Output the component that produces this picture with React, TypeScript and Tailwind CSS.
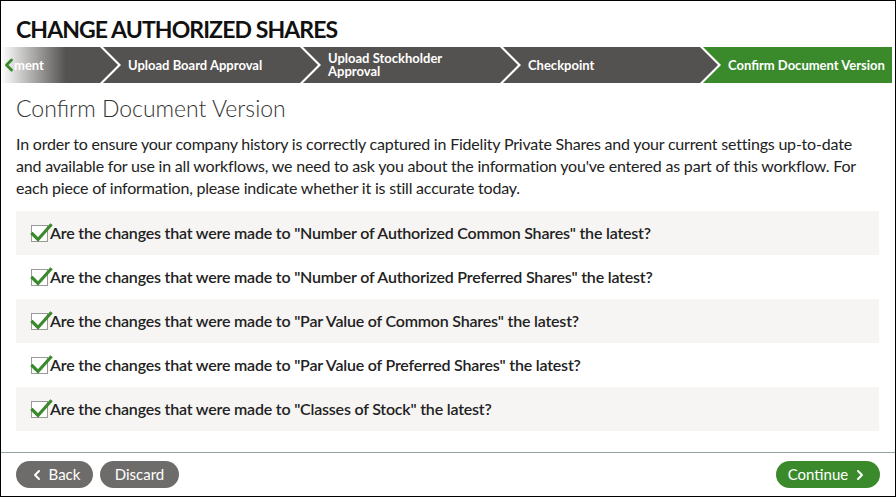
import { ChevronLeft, ChevronRight } from 'lucide-react';

const questions = [
  'Number of Authorized Common Shares',
  'Number of Authorized Preferred Shares',
  'Par Value of Common Shares',
  'Par Value of Preferred Shares',
  'Classes of Stock',
];

function CheckedBox() {
  return (
    <span className="relative inline-block w-[17px] h-[17px] border border-[#9a9a9a] bg-white shrink-0">
      <svg className="absolute -left-[1px] -top-[4px] w-[22px] h-[22px] overflow-visible" viewBox="0 0 22 22" fill="none">
        <path d="M1.5 12 L7 17.5 L19.5 3.5" stroke="#3a8a2c" strokeWidth={3.2} strokeLinecap="square" strokeLinejoin="miter" />
      </svg>
    </span>
  );
}

export default function App() {
  return (
    <div className="w-[896px] h-[497px] border border-black bg-white flex flex-col font-['Lato',sans-serif] text-[#222] overflow-hidden">
      {/* Title */}
      <h1 className="px-[15px] pt-[13px] text-[23px] leading-[30px] font-bold tracking-[-0.9px] text-[#111]">
        CHANGE AUTHORIZED SHARES
      </h1>

      {/* Stepper */}
      <div className="mt-[3px] flex h-[36px] pr-[3px] text-white text-[13px] font-bold leading-[13px]">
        <div className="relative w-[117px] shrink-0 flex items-center pl-[13px] bg-[linear-gradient(to_right,#ffffff_0px,#545250_65px)] [clip-path:polygon(0_0,calc(100%_-_18px)_0,100%_50%,calc(100%_-_18px)_100%,0_100%)]">
          <ChevronLeft className="absolute -left-[2px] w-[20px] h-[20px] text-[#3a8a2c]" strokeWidth={3.5} />
          ment
        </div>
        {['Upload Board Approval', 'Upload Stockholder Approval', 'Checkpoint'].map((s) => (
          <div
            key={s}
            className="w-[215px] -ml-[15px] shrink-0 flex items-center pl-[25px] pr-[40px] bg-[#545250] [clip-path:polygon(0_0,calc(100%_-_18px)_0,100%_50%,calc(100%_-_18px)_100%,0_100%,18px_50%)]"
          >
            {s}
          </div>
        ))}
        <div className="flex-1 -ml-[15px] flex items-center pl-[25px] bg-[#3a8a2c] whitespace-nowrap [clip-path:polygon(0_0,100%_0,100%_100%,0_100%,18px_50%)]">
          Confirm Document Version
        </div>
      </div>

      {/* Content */}
      <div className="px-[15px] flex-1">
        <h2 className="mt-[10px] text-[23px] leading-[30px] font-light text-[#333]">Confirm Document Version</h2>
        <p className="mt-[10px] text-[16px] leading-[22px] tracking-[-0.2px] text-[#222] pr-[2px]">
          In order to ensure your company history is correctly captured in Fidelity Private Shares and your current settings up-to-date and available for use in all workflows, we need to ask you about the information you've entered as part of this workflow. For each piece of information, please indicate whether it is still accurate today.
        </p>
        <div className="mt-[12px] mr-[1px]">
          {questions.map((q, i) => (
            <div
              key={q}
              className={`h-[44px] flex items-center gap-[2px] pl-[15px] ${i % 2 === 0 ? 'bg-[#f6f5f3]' : 'bg-white'}`}
            >
              <CheckedBox />
              <span className="text-[16px] font-semibold tracking-[-0.2px] text-[#222]">
                Are the changes that were made to "{q}" the latest?
              </span>
            </div>
          ))}
        </div>
      </div>

      {/* Footer */}
      <div className="border-t border-[#92a6a0] h-[44px] flex items-center px-[15px] gap-[7px] text-[15px] text-white">
        <button className="h-[27px] w-[77px] rounded-full bg-[#6e6c6a] flex items-center justify-center gap-[4px]">
          <ChevronLeft className="w-[16px] h-[16px]" strokeWidth={3} />
          Back
        </button>
        <button className="h-[27px] w-[79px] rounded-full bg-[#6e6c6a] flex items-center justify-center">Discard</button>
        <button className="ml-auto h-[27px] w-[104px] rounded-full bg-[#3a8a2c] flex items-center justify-center gap-[4px]">
          Continue
          <ChevronRight className="w-[16px] h-[16px]" strokeWidth={3} />
        </button>
      </div>
    </div>
  );
}
